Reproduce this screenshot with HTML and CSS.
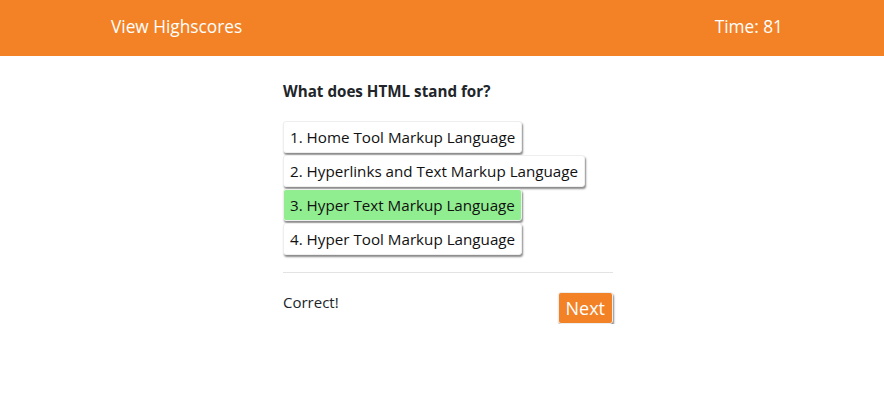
FILE: index.html
```html
<!DOCTYPE html>
<html>
<head>
<meta charset="utf-8">
<link rel="stylesheet" href="styles.css">
</head>
<body>
<header class="topbar">
  <a class="highscores">View Highscores</a>
  <span class="timer">Time: 81</span>
</header>
<main class="quiz">
  <h2 class="question">What does HTML stand for?</h2>
  <div class="choices">
    <button class="choice">1. Home Tool Markup Language</button>
    <button class="choice">2. Hyperlinks and Text Markup Language</button>
    <button class="choice correct">3. Hyper Text Markup Language</button>
    <button class="choice">4. Hyper Tool Markup Language</button>
  </div>
  <hr class="divider">
  <div class="feedback">
    <span class="result">Correct!</span>
    <button class="next">Next</button>
  </div>
</main>
</body>
</html>
```
FILE: styles.css
```css
* { box-sizing: border-box; }
body {
  margin: 0;
  font-family: "Open Sans", "Noto Sans", sans-serif;
  color: #212529;
  background: #fff;
}
.topbar {
  height: 56px;
  background: #f38226;
  display: flex;
  justify-content: space-between;
  align-items: center;
  padding: 0 101px 4px 111px;
  color: #fff;
  font-size: 17.3px;
}
.quiz {
  width: 330px;
  margin-left: 283px;
  padding-top: 24px;
}
.question {
  margin: 0 0 19px;
  font-size: 15.2px;
  font-weight: 700;
  line-height: 22px;
}
.choices {
  display: flex;
  flex-direction: column;
  align-items: flex-start;
  gap: 2px;
}
.choice {
  font-family: inherit;
  font-size: 15.2px;
  color: #111;
  background: #fff;
  border: 1px solid #eee;
  border-radius: 3px;
  box-shadow: 1px 2px 2px #8a8a8a;
  height: 32px;
  padding: 0 6px;
  margin: 0;
}
.choice.correct { background: #90ee90; }
.divider {
  margin: 17px 0 0;
  border: 0;
  border-top: 1px solid #e3e3e3;
}
.feedback {
  display: flex;
  justify-content: space-between;
  align-items: flex-start;
  padding-top: 18px;
}
.result { font-size: 15px; line-height: 22px; }
.next {
  font-family: inherit;
  font-size: 18px;
  color: #fff;
  background: #f38226;
  border: 1px solid #eee;
  border-radius: 3px;
  box-shadow: 1px 2px 2px #8a8a8a;
  height: 32px;
  padding: 0 7px;
  margin-top: 1px;
}
```
